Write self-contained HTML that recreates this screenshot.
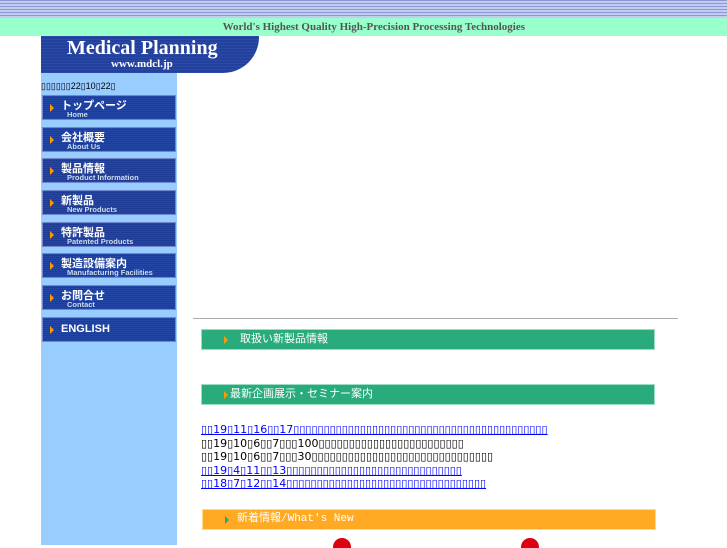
<!DOCTYPE html>
<html><head><meta charset="utf-8"><style>
body{margin:0;width:727px;height:545px;position:relative;overflow:hidden;background:#fff;font-family:"Liberation Sans","Noto Sans CJK JP",sans-serif}
.stripes{position:absolute;left:0;top:0;width:727px;height:18px;background:repeating-linear-gradient(#8a98d8 0 1px,#c4cdf0 1px 3px)}
.band{position:absolute;left:0;top:18px;width:727px;height:18px;background:#99ffcc;font:bold 11px "Liberation Serif",serif;color:#555;text-align:right;box-sizing:border-box;padding-right:202px;line-height:18px}
.side{position:absolute;left:41px;top:73px;width:136px;height:472px;background:#99ccff}
.logo{position:absolute;left:41px;top:36px;width:218px;height:37px;background:repeating-linear-gradient(#2a4aa8 0 1px,#22409c 1px 3px);border-bottom-right-radius:36px;color:#fff;font-family:"Liberation Serif",serif;text-align:center}
.logo .t{font-size:20px;font-weight:bold;position:absolute;left:26px;top:1px}
.logo .u{font-size:11px;font-weight:bold;position:absolute;left:70px;top:22px}
.date{position:absolute;left:41px;top:81px;font-size:9px;color:#000}
.btn{position:absolute;left:42px;width:134px;height:25px;background:repeating-linear-gradient(#2446a4 0 1px,#1e3c96 1px 2px);border:1px solid #6e86cc;box-sizing:border-box;color:#fff}
.btn .a{position:absolute;left:7px;top:8px;width:0;height:0;border-left:4px solid #f90;border-top:4px solid transparent;border-bottom:4px solid transparent}
.btn .j{position:absolute;left:18px;top:1px;font-size:11px;font-weight:bold}
.btn .e{position:absolute;left:24px;top:14px;font-size:7.5px;color:#cde;font-weight:bold}
.hr{position:absolute;left:193px;top:318px;width:485px;height:1px;background:#aaa}
.gb{position:absolute;left:201px;width:454px;height:21px;background:#2aab7c;border:1px solid #9ddcc4;box-sizing:border-box;color:#fff;font-size:11px;line-height:19px}
.gb .a{position:absolute;left:22px;top:6px;border-left:4px solid #f90;border-top:4px solid transparent;border-bottom:4px solid transparent}
.ln{position:absolute;left:201px;font-size:11px;line-height:13px;white-space:nowrap;font-family:"DejaVu Sans",sans-serif}
.ln.b{color:#00f;text-decoration:underline}
.ob{position:absolute;left:202px;top:509px;width:454px;height:21px;background:#fa2;border:1px solid #fd8;box-sizing:border-box;color:#fff;font:11px "Liberation Mono",monospace;line-height:19px}
.ob .a{position:absolute;left:22px;top:6px;border-left:4px solid #2a8;border-top:4px solid transparent;border-bottom:4px solid transparent}
</style></head><body>
<div class="stripes"></div>
<div class="band">World's Highest Quality High-Precision Processing Technologies</div>
<div class="side"></div>
<div class="logo"><span class="t">Medical Planning</span><span class="u">www.mdcl.jp</span></div>
<div class="date">▯▯▯▯▯▯22▯10▯22▯</div>
<div class="btn" style="top:95px"><i class="a"></i><span class="j">トップページ</span><span class="e">Home</span></div>
<div class="btn" style="top:127px"><i class="a"></i><span class="j">会社概要</span><span class="e">About Us</span></div>
<div class="btn" style="top:158px"><i class="a"></i><span class="j">製品情報</span><span class="e">Product Information</span></div>
<div class="btn" style="top:190px"><i class="a"></i><span class="j">新製品</span><span class="e">New Products</span></div>
<div class="btn" style="top:222px"><i class="a"></i><span class="j">特許製品</span><span class="e">Patented Products</span></div>
<div class="btn" style="top:253px"><i class="a"></i><span class="j">製造設備案内</span><span class="e">Manufacturing Facilities</span></div>
<div class="btn" style="top:285px"><i class="a"></i><span class="j">お問合せ</span><span class="e">Contact</span></div>
<div class="btn" style="top:317px"><i class="a" style="top:8px"></i><span class="j" style="top:5px">ENGLISH</span></div>
<div class="hr"></div>
<div class="gb" style="top:329px"><i class="a"></i><span style="position:absolute;left:38px">取扱い新製品情報</span></div>
<div class="gb" style="top:384px"><i class="a"></i><span style="position:absolute;left:28px">最新企画展示・セミナー案内</span></div>
<div class="ln b" style="top:423px">▯▯19▯11▯16▯▯17▯▯▯▯▯▯▯▯▯▯▯▯▯▯▯▯▯▯▯▯▯▯▯▯▯▯▯▯▯▯▯▯▯▯▯▯▯▯▯▯▯▯</div>
<div class="ln" style="top:437px">▯▯19▯10▯6▯▯7▯▯▯100▯▯▯▯▯▯▯▯▯▯▯▯▯▯▯▯▯▯▯▯▯▯▯▯</div>
<div class="ln" style="top:450px">▯▯19▯10▯6▯▯7▯▯▯30▯▯▯▯▯▯▯▯▯▯▯▯▯▯▯▯▯▯▯▯▯▯▯▯▯▯▯▯▯▯</div>
<div class="ln b" style="top:464px">▯▯19▯4▯11▯▯13▯▯▯▯▯▯▯▯▯▯▯▯▯▯▯▯▯▯▯▯▯▯▯▯▯▯▯▯▯</div>
<div class="ln b" style="top:477px">▯▯18▯7▯12▯▯14▯▯▯▯▯▯▯▯▯▯▯▯▯▯▯▯▯▯▯▯▯▯▯▯▯▯▯▯▯▯▯▯▯</div>
<div class="ob"><i class="a"></i><span style="position:absolute;left:34px">新着情報/What's  New</span></div>
<div style="position:absolute;left:333px;top:538px;width:18px;height:10px;background:#d01;border-radius:9px 9px 0 0"></div>
<div style="position:absolute;left:521px;top:538px;width:18px;height:10px;background:#d01;border-radius:9px 9px 0 0"></div>
</body></html>
